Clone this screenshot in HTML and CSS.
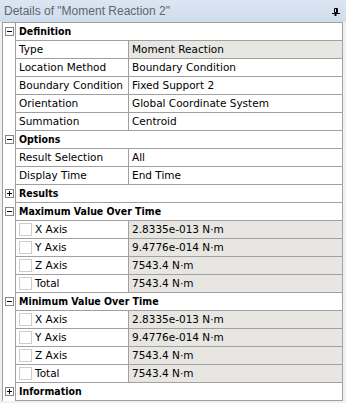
FILE: index.html
```html
<!DOCTYPE html>
<html lang="en">
  <head>
    <meta charset="UTF-8" />
    <title>Details of "Moment Reaction 2"</title>
    <link rel="stylesheet" href="styles.css">
  </head>
  <body>
    <div class="title-bar">
      <span class="title">Details of "Moment Reaction 2"</span>
      <svg class="pin" width="8" height="8" viewBox="0 0 8 8">
        <path d="M2.5 0.5h3v4h-3z" fill="none" stroke="#000" />
        <path d="M4.5 1v4" stroke="#000" />
        <path d="M0 5.5h8" stroke="#000" />
        <path d="M3.5 6v2" stroke="#000" stroke-width="2" />
      </svg>
    </div>

    <div class="grid">
      <div class="row">
        <span class="gutter"><svg class="toggle" width="9" height="9" viewBox="0 0 9 9"><rect x="0.5" y="0.5" width="8" height="8" fill="#fff" stroke="#848484" /><path d="M2 4.5h5" stroke="#000" /></svg></span>
        <div class="line"><div class="group">Definition</div></div>
      </div>
      <div class="row">
        <span class="gutter"></span>
        <div class="line"><div class="name">Type</div><div class="value readonly">Moment Reaction</div></div>
      </div>
      <div class="row">
        <span class="gutter"></span>
        <div class="line"><div class="name">Location Method</div><div class="value">Boundary Condition</div></div>
      </div>
      <div class="row">
        <span class="gutter"></span>
        <div class="line"><div class="name">Boundary Condition</div><div class="value">Fixed Support 2</div></div>
      </div>
      <div class="row">
        <span class="gutter"></span>
        <div class="line"><div class="name">Orientation</div><div class="value">Global Coordinate System</div></div>
      </div>
      <div class="row">
        <span class="gutter"></span>
        <div class="line"><div class="name">Summation</div><div class="value">Centroid</div></div>
      </div>

      <div class="row">
        <span class="gutter"><svg class="toggle" width="9" height="9" viewBox="0 0 9 9"><rect x="0.5" y="0.5" width="8" height="8" fill="#fff" stroke="#848484" /><path d="M2 4.5h5" stroke="#000" /></svg></span>
        <div class="line"><div class="group">Options</div></div>
      </div>
      <div class="row">
        <span class="gutter"></span>
        <div class="line"><div class="name">Result Selection</div><div class="value">All</div></div>
      </div>
      <div class="row">
        <span class="gutter"></span>
        <div class="line"><div class="name">Display Time</div><div class="value">End Time</div></div>
      </div>

      <div class="row">
        <span class="gutter"><svg class="toggle" width="9" height="9" viewBox="0 0 9 9"><rect x="0.5" y="0.5" width="8" height="8" fill="#fff" stroke="#848484" /><path d="M2 4.5h5M4.5 2v5" stroke="#000" /></svg></span>
        <div class="line"><div class="group">Results</div></div>
      </div>

      <div class="row">
        <span class="gutter"><svg class="toggle" width="9" height="9" viewBox="0 0 9 9"><rect x="0.5" y="0.5" width="8" height="8" fill="#fff" stroke="#848484" /><path d="M2 4.5h5" stroke="#000" /></svg></span>
        <div class="line"><div class="group">Maximum Value Over Time</div></div>
      </div>
      <div class="row">
        <span class="gutter"></span>
        <div class="line"><div class="name"><span class="check"></span>X Axis</div><div class="value readonly">2.8335e-013 N·m</div></div>
      </div>
      <div class="row">
        <span class="gutter"></span>
        <div class="line"><div class="name"><span class="check"></span>Y Axis</div><div class="value readonly">9.4776e-014 N·m</div></div>
      </div>
      <div class="row">
        <span class="gutter"></span>
        <div class="line"><div class="name"><span class="check"></span>Z Axis</div><div class="value readonly">7543.4 N·m</div></div>
      </div>
      <div class="row">
        <span class="gutter"></span>
        <div class="line"><div class="name"><span class="check"></span>Total</div><div class="value readonly">7543.4 N·m</div></div>
      </div>

      <div class="row">
        <span class="gutter"><svg class="toggle" width="9" height="9" viewBox="0 0 9 9"><rect x="0.5" y="0.5" width="8" height="8" fill="#fff" stroke="#848484" /><path d="M2 4.5h5" stroke="#000" /></svg></span>
        <div class="line"><div class="group">Minimum Value Over Time</div></div>
      </div>
      <div class="row">
        <span class="gutter"></span>
        <div class="line"><div class="name"><span class="check"></span>X Axis</div><div class="value readonly">2.8335e-013 N·m</div></div>
      </div>
      <div class="row">
        <span class="gutter"></span>
        <div class="line"><div class="name"><span class="check"></span>Y Axis</div><div class="value readonly">9.4776e-014 N·m</div></div>
      </div>
      <div class="row">
        <span class="gutter"></span>
        <div class="line"><div class="name"><span class="check"></span>Z Axis</div><div class="value readonly">7543.4 N·m</div></div>
      </div>
      <div class="row">
        <span class="gutter"></span>
        <div class="line"><div class="name"><span class="check"></span>Total</div><div class="value readonly">7543.4 N·m</div></div>
      </div>

      <div class="row">
        <span class="gutter"><svg class="toggle" width="9" height="9" viewBox="0 0 9 9"><rect x="0.5" y="0.5" width="8" height="8" fill="#fff" stroke="#848484" /><path d="M2 4.5h5M4.5 2v5" stroke="#000" /></svg></span>
        <div class="line"><div class="group">Information</div></div>
      </div>
    </div>
  </body>
</html>
```

FILE: styles.css
```css
body {
  margin: 0;
  width: 346px;
  height: 403px;
  overflow: hidden;
  background-color: #f0f0f0;
  font-family: "DejaVu Sans", Verdana, sans-serif;
  font-size: 10.5px;
  color: #000;
}
.title-bar {
  display: flex;
  align-items: center;
  justify-content: space-between;
  height: 22px;
  padding: 0 6px 0 4px;
  box-sizing: border-box;
  background: linear-gradient(#dbe6f3, #cfdcec);
}
.title {
  font-family: "Liberation Sans", Arial, sans-serif;
  font-size: 12px;
  color: #60656b;
  margin-top: -1px;
}
.pin {
  display: block;
  margin-top: 1px;
}
.grid {
  margin: 0 3px 0 2px;
  background: white;
  border: 1px solid #a0a0a0;
  border-bottom: none;
}
.row {
  display: flex;
  height: 18px;
}
.gutter {
  display: flex;
  align-items: center;
  width: 12px;
  padding-left: 2px;
  box-sizing: border-box;
}
.toggle {
  display: block;
  margin-top: -1px;
}
.line {
  flex: 1;
  display: flex;
  border-left: 1px solid #a0a0a0;
  border-bottom: 1px solid #a0a0a0;
  line-height: 17px;
  white-space: nowrap;
}
.group {
  padding-left: 3px;
  font-family: "DejaVu Sans Condensed", "DejaVu Sans", sans-serif;
  font-weight: bold;
}
.name {
  display: flex;
  align-items: center;
  width: 113px;
  padding-left: 3px;
  box-sizing: border-box;
  border-right: 1px solid #a0a0a0;
}
.value {
  flex: 1;
  padding-left: 3px;
}
.readonly {
  background-color: #e7e6e2;
}
.check {
  width: 13px;
  height: 13px;
  margin-right: 3px;
  box-sizing: border-box;
  border: 1px solid #cdcdcd;
  background: white;
}
```
